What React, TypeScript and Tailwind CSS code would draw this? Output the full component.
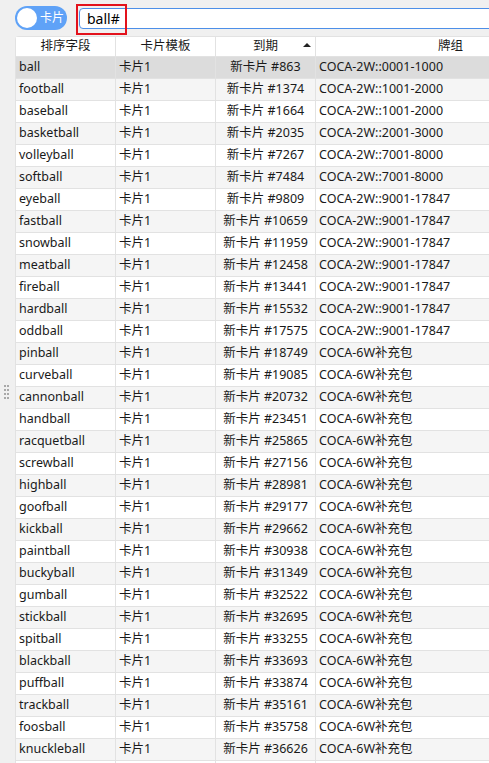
import React from "react";

const rows: [string, string, string][] = [
  ["ball", "#863", "COCA-2W::0001-1000"],
  ["football", "#1374", "COCA-2W::1001-2000"],
  ["baseball", "#1664", "COCA-2W::1001-2000"],
  ["basketball", "#2035", "COCA-2W::2001-3000"],
  ["volleyball", "#7267", "COCA-2W::7001-8000"],
  ["softball", "#7484", "COCA-2W::7001-8000"],
  ["eyeball", "#9809", "COCA-2W::9001-17847"],
  ["fastball", "#10659", "COCA-2W::9001-17847"],
  ["snowball", "#11959", "COCA-2W::9001-17847"],
  ["meatball", "#12458", "COCA-2W::9001-17847"],
  ["fireball", "#13441", "COCA-2W::9001-17847"],
  ["hardball", "#15532", "COCA-2W::9001-17847"],
  ["oddball", "#17575", "COCA-2W::9001-17847"],
  ["pinball", "#18749", "COCA-6W补充包"],
  ["curveball", "#19085", "COCA-6W补充包"],
  ["cannonball", "#20732", "COCA-6W补充包"],
  ["handball", "#23451", "COCA-6W补充包"],
  ["racquetball", "#25865", "COCA-6W补充包"],
  ["screwball", "#27156", "COCA-6W补充包"],
  ["highball", "#28981", "COCA-6W补充包"],
  ["goofball", "#29177", "COCA-6W补充包"],
  ["kickball", "#29662", "COCA-6W补充包"],
  ["paintball", "#30938", "COCA-6W补充包"],
  ["buckyball", "#31349", "COCA-6W补充包"],
  ["gumball", "#32522", "COCA-6W补充包"],
  ["stickball", "#32695", "COCA-6W补充包"],
  ["spitball", "#33255", "COCA-6W补充包"],
  ["blackball", "#33693", "COCA-6W补充包"],
  ["puffball", "#33874", "COCA-6W补充包"],
  ["trackball", "#35161", "COCA-6W补充包"],
  ["foosball", "#35758", "COCA-6W补充包"],
  ["knuckleball", "#36626", "COCA-6W补充包"],
  ["", "", ""],
];

const cell = "h-full flex items-center border-r border-[#e2e2e2] shrink-0";

export default function App() {
  return (
    <div
      className="w-[489px] h-[763px] overflow-hidden bg-[#f0f0f0] text-[12.5px] text-[#1a1a1a]"
      style={{ fontFamily: '"Noto Sans", "Noto Sans CJK SC", sans-serif' }}
    >
      {/* top bar */}
      <div className="h-9 flex items-center pl-[15px]">
        <div className="w-[52px] h-6 rounded-full bg-[#5fa2f7] flex items-center pl-[2px] gap-[3px]">
          <div className="w-5 h-5 rounded-full bg-white" />
          <span className="text-white text-[12px] leading-none">卡片</span>
        </div>
        <div className="relative ml-3 flex-1 h-[21px] bg-white border border-[#4d8fe8] rounded-[4px] -mr-2 flex items-center pl-[7px]">
          <span className="text-[14px] text-black">ball#</span>
          <div className="absolute -left-[4px] -top-[5px] w-[51px] h-[31px] border-2 border-[#e3121c]" />
        </div>
      </div>

      <div className="flex">
        {/* grip */}
        <div className="w-[15px] shrink-0 relative">
          <div className="absolute left-[4px] top-[349px] grid grid-cols-2 gap-x-[1px] gap-y-[2px]">
            {Array.from({ length: 8 }).map((_, i) => (
              <div key={i} className="w-[2px] h-[2px] bg-[#a8a8a8]" />
            ))}
          </div>
        </div>

        {/* table */}
        <div className="w-[570px] shrink-0 border-l border-t border-[#e2e2e2] rounded-tl-[4px] bg-white">
          <div className="flex h-5 border-b border-[#e2e2e2] bg-white">
            <div className={`${cell} w-[100px] justify-center`}>排序字段</div>
            <div className={`${cell} w-[100px] justify-center`}>卡片模板</div>
            <div className={`${cell} w-[100px] justify-center relative`}>
              到期
              <span className="absolute right-[4px] top-[6px] w-0 h-0 border-l-[4px] border-r-[4px] border-b-[4px] border-l-transparent border-r-transparent border-b-[#222]" />
            </div>
            <div className={`${cell} w-[270px] justify-center`}>牌组</div>
          </div>
          {rows.map((r, i) => (
            <div
              key={i}
              className={`flex h-[22px] border-b border-[#e2e2e2] ${
                i === 0 ? "bg-[#dcdcdc]" : i % 2 === 1 ? "bg-[#f5f5f5]" : "bg-white"
              }`}
            >
              <div className={`${cell} w-[100px] pl-[3px]`}>{r[0]}</div>
              <div className={`${cell} w-[100px] pl-[3px]`}>{r[0] ? "卡片1" : ""}</div>
              <div className={`${cell} w-[100px] justify-center`}>{r[1] ? `新卡片 ${r[1]}` : ""}</div>
              <div className={`${cell} w-[270px] pl-[3px]`}>{r[2]}</div>
            </div>
          ))}
        </div>
      </div>
    </div>
  );
}
